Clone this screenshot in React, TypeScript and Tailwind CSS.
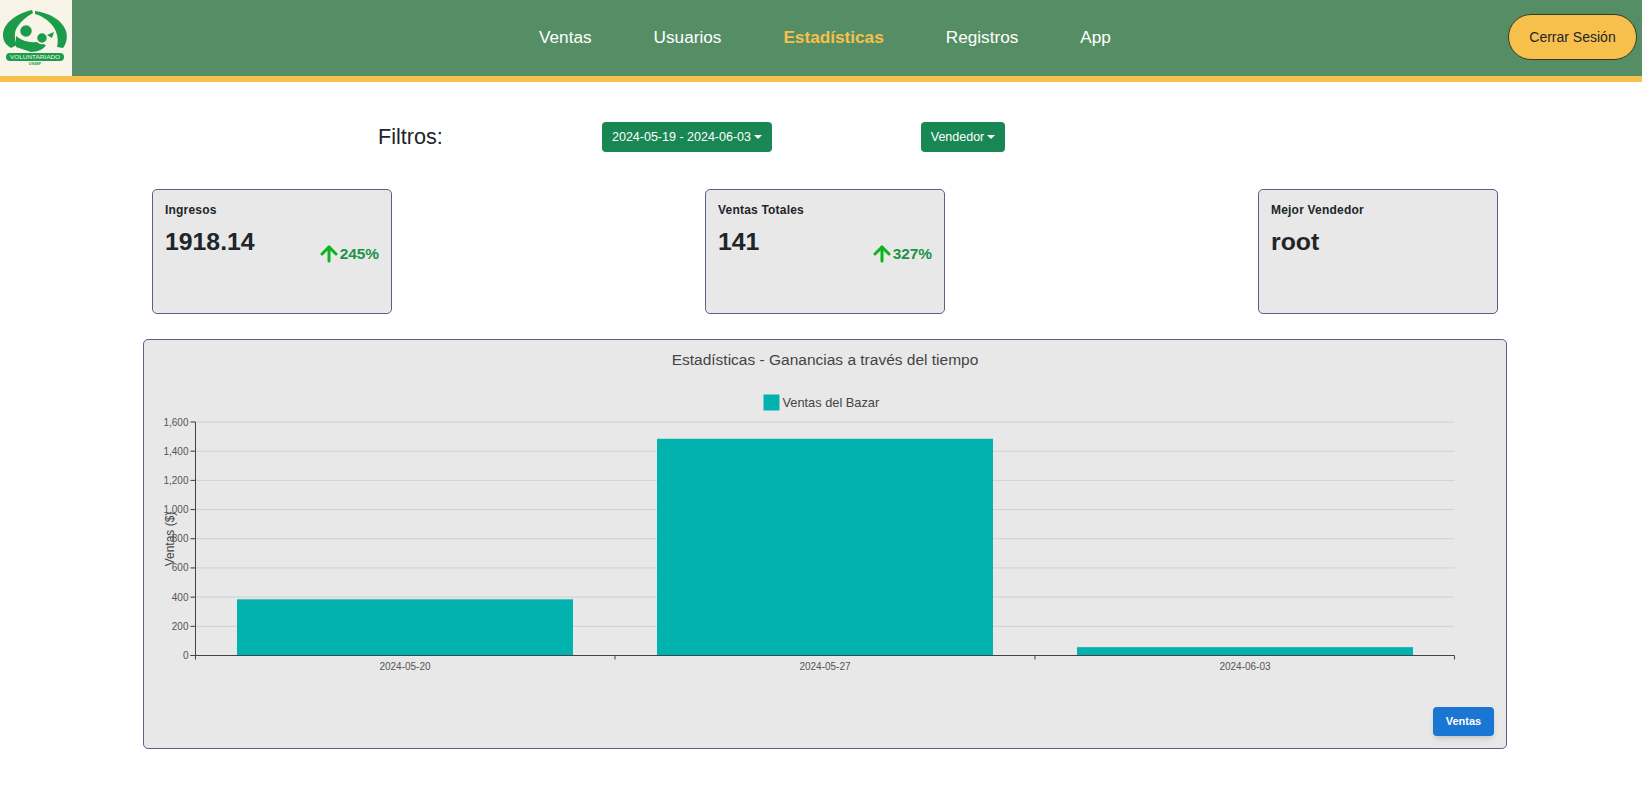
import { ArrowUp } from 'lucide-react'

const navItems = ['Ventas', 'Usuarios', 'Estadísticas', 'Registros', 'App']

const stats = [
  { label: 'Ingresos', value: '1918.14', change: '245%' },
  { label: 'Ventas Totales', value: '141', change: '327%' },
  { label: 'Mejor Vendedor', value: 'root', change: null },
]

const yTicks = [0, 200, 400, 600, 800, 1000, 1200, 1400, 1600]

const bars = [
  { date: '2024-05-20', x: 93, width: 336, value: 385 },
  { date: '2024-05-27', x: 513, width: 336, value: 1485 },
  { date: '2024-06-03', x: 933, width: 336, value: 57 },
]

// plot area, in the svg's own coordinates
const left = 51.5
const right = 1310.5
const bottom = 315.5
const top = 82
const yFor = (v: number) => bottom - ((bottom - top) * v) / 1600

function Logo() {
  const green = '#1c9c4b'
  const cream = '#f8f4e8'
  return (
    <svg viewBox="0 0 72 76" className="h-[76px] w-[72px]">
      <rect width="72" height="76" fill={cream} />
      <path d="M32 10 C15 14 3 24 3 35 C3 41 6 45 11 48 L17 45 C14 38 14 31 18 26 C21 21 26 17 33 13 Z" fill={green} />
      <path d="M35 11 C50 13 62 20 66 31 C68 38 66 44 63 48 L57 47 C59 39 57 31 52 25 C48 20 42 16 35 14 Z" fill={green} />
      <path d="M16 36 C22 41 30 43 36 42 L46 45 C44 49 38 52 31 52 L16 47 Z" fill={green} />
      <circle cx="26" cy="31" r="6.5" fill={green} stroke={cream} strokeWidth="1.5" />
      <circle cx="42" cy="38" r="5.5" fill={green} stroke={cream} strokeWidth="1.5" />
      <path d="M47 35 L54 32 L52 38 Z" fill={green} />
      <rect x="6" y="53" width="58" height="8" rx="4" fill={green} />
      <text x="35" y="59" fontSize="5.5" fill={cream} textAnchor="middle" textLength="50" lengthAdjust="spacingAndGlyphs">VOLUNTARIADO</text>
      <text x="35" y="64.5" fontSize="3.5" fontWeight="bold" fill={green} textAnchor="middle">UNSBP</text>
    </svg>
  )
}

function Chart() {
  return (
    <svg width="1362" height="340" className="block" fontFamily="'Liberation Sans', Arial, sans-serif">
      <rect x="619.5" y="54.5" width="16" height="16" fill="#02b2af" />
      <text x="638.5" y="67" fontSize="12.8" fill="#444">Ventas del Bazar</text>

      {yTicks.map(t => (
        <g key={t}>
          <line x1={left - 5} x2={t === 0 ? left : right} y1={yFor(t)} y2={yFor(t)} stroke={t === 0 ? '#444' : '#d0d0d0'} />
          <line x1={left - 5} x2={left} y1={yFor(t)} y2={yFor(t)} stroke="#444" />
          <text x={left - 7} y={yFor(t) + 3.5} fontSize="10" fill="#555" textAnchor="end">{t.toLocaleString('en-US')}</text>
        </g>
      ))}

      {bars.map(b => (
        <g key={b.date}>
          <rect x={b.x} y={yFor(b.value)} width={b.width} height={bottom - yFor(b.value)} fill="#02b2af" />
          <text x={b.x + b.width / 2} y={bottom + 14} fontSize="10" fill="#555" textAnchor="middle">{b.date}</text>
        </g>
      ))}

      <path d={`M${left} ${top} V${bottom + 3}`} stroke="#444" fill="none" />
      <path d={`M${left} ${bottom} H${right}`} stroke="#444" fill="none" />
      {[left, 471, 891, right].map(x => (
        <line key={x} x1={x} x2={x} y1={bottom} y2={bottom + 4} stroke="#444" />
      ))}

      <text x="0" y="0" fontSize="12" fill="#444" textAnchor="middle" transform="translate(30 199) rotate(-90)">Ventas ($)</text>
    </svg>
  )
}

export default function App() {
  return (
    <div className="min-h-screen bg-white font-['Liberation_Sans',Arial,sans-serif] text-[#212529]">

      {/* Navbar */}
      <nav className="flex h-[82px] items-start border-b-[6px] border-[#f7c04d] bg-[#558e64]">
        <Logo />
        <ul className="ml-[467px] flex h-[76px] items-center gap-[62px] pb-[1px]">
          {navItems.map(item => (
            <li
              key={item}
              className={item === 'Estadísticas' ? 'text-[17.2px] font-bold text-[#f7c04d]' : 'text-[17.2px] text-white'}
            >
              {item}
            </li>
          ))}
        </ul>
        <button className="ml-auto mr-[5px] mt-[14px] h-[46px] w-[129px] rounded-[23px] border border-[#3a3a20] bg-[#f7c04d] text-[14px] text-[#212529]">
          Cerrar Sesión
        </button>
      </nav>

      {/* Filtros */}
      <div className="mt-[40px] flex h-[30px] items-center pl-[378px]">
        <span className="w-[224px] pt-[1px] text-[21.6px]">Filtros:</span>
        <button className="flex h-[30px] w-[170px] items-center justify-center gap-[3px] rounded bg-[#198754] text-[12.5px] text-white">
          2024-05-19 - 2024-06-03
          <span className="border-x-[4px] border-t-[4px] border-x-transparent border-t-white" />
        </button>
        <button className="ml-[149px] flex h-[30px] w-[84px] items-center justify-center gap-[3px] rounded bg-[#198754] text-[12.5px] text-white">
          Vendedor
          <span className="border-x-[4px] border-t-[4px] border-x-transparent border-t-white" />
        </button>
      </div>

      {/* Tarjetas */}
      <div className="ml-[152px] mt-[37px] flex w-[1346px] justify-between">
        {stats.map(s => (
          <div key={s.label} className="relative h-[125px] w-[240px] rounded-[5px] border border-[#5a5f8c] bg-[#e8e8e8] px-[12px] pt-[13px]">
            <p className="text-[12px] font-bold leading-[15px] tracking-[0.2px]">{s.label}</p>
            <p className="mt-[9px] text-[24.8px] font-bold leading-[30px]">{s.value}</p>
            {s.change && (
              <div className="absolute right-[12px] top-[52px] flex items-center">
                <ArrowUp size={24} strokeWidth={3} className="-mr-[1px] text-[#0bb31c]" />
                <span className="text-[15.4px] font-bold text-[#1c9348]">{s.change}</span>
              </div>
            )}
          </div>
        ))}
      </div>

      {/* Grafica */}
      <div className="relative ml-[143px] mt-[25px] h-[410px] w-[1364px] rounded-[5px] border border-[#5a5f8c] bg-[#e8e8e8]">
        <h2 className="pt-[11px] text-center text-[15.5px] leading-[18px] text-[#444]">Estadísticas - Ganancias a través del tiempo</h2>
        <div className="absolute left-0 top-0">
          <Chart />
        </div>
        <button className="absolute bottom-[12px] right-[12px] h-[29px] w-[61px] rounded-[4px] bg-[#1976d2] text-[11px] font-bold text-white shadow-md">
          Ventas
        </button>
      </div>
    </div>
  )
}
